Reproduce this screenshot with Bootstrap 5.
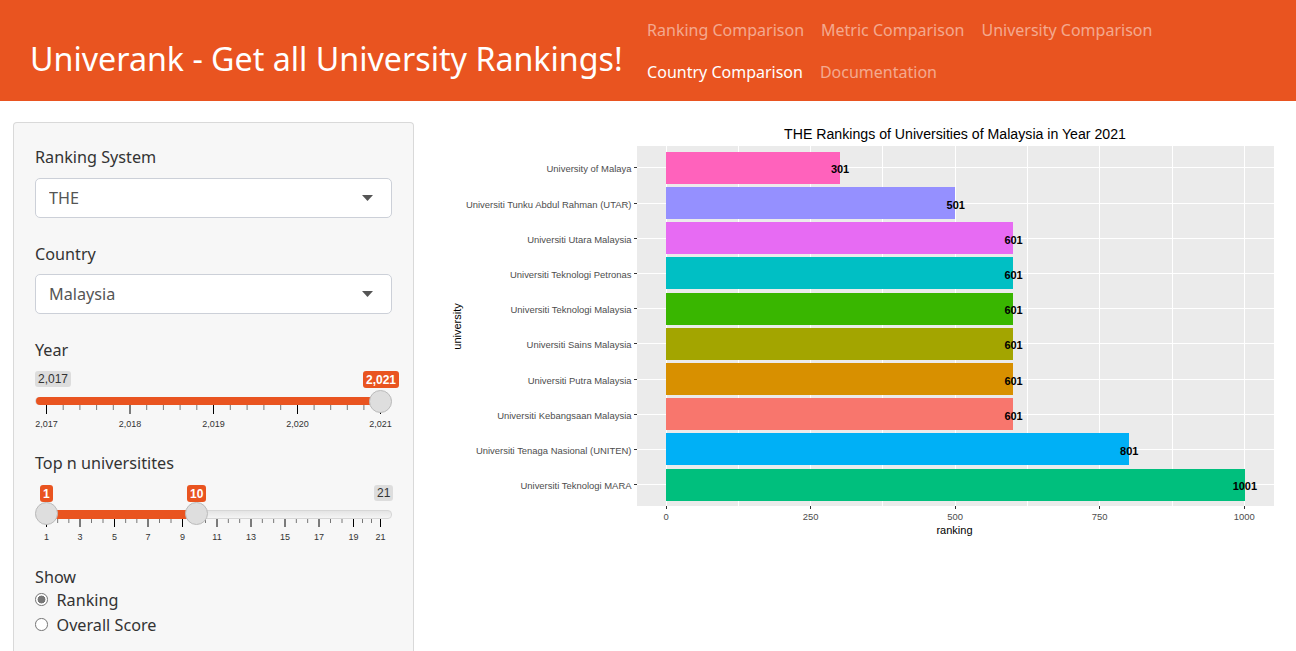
<!DOCTYPE html>
<html lang="en">
<head>
<meta charset="UTF-8">
<meta name="viewport" content="width=device-width, initial-scale=1.0">
<title>Univerank</title>
<link rel="stylesheet" href="https://cdn.jsdelivr.net/npm/bootstrap@5.3.0/dist/css/bootstrap.min.css">
<style>
html, body { height: 651px; overflow: hidden; }
body { font-family: "Noto Sans", sans-serif; color: #333; background: #fff; }
.top-bar { background: #e95420; height: 101px; padding: 0 0 0 30px; flex-wrap: nowrap; align-items: center; justify-content: flex-start; }
.top-bar .navbar-brand { font-size: 32.2px; color: #fff; padding: 16px 0 0; margin: 0 24.5px 0 0; line-height: 38px; }
.top-bar .navbar-nav { width: 560px; flex-wrap: wrap; flex-direction: row; column-gap: 17px; }
.top-bar .nav-link { font-size: 16px; line-height: 22px; padding: 10px 0; color: rgba(255, 255, 255, .5); }
.top-bar .nav-link.active { color: #fff; }
.side-col { padding: 21px 18px 0 13px; }
.filter-well { background: #f7f7f7; border: 1px solid #d9d9d9; border-bottom: 0; border-radius: 4px 4px 0 0; padding: 22px 21px 0; height: 529px; }
.filter-label { display: block; font-size: 16.2px; line-height: 24px; margin-bottom: 9px; color: #333; }
.filter-select { height: 40px; font-size: 16.2px; color: #555; padding: 0 13px; border-color: #ccd0d8; border-radius: 5px; margin-bottom: 24px; background-image: url("data:image/svg+xml,%3csvg xmlns='http://www.w3.org/2000/svg' viewBox='0 0 11 6'%3e%3cpath fill='%23555' d='M0 0h11L5.500 6z'/%3e%3c/svg%3e"); background-size: 11px 6px; background-position: right 18px center; }
.range-box { position: relative; width: 357px; margin-bottom: 16px; }
#slider-top { margin-bottom: 18px; }
#slider-top .range-badge { top: 1px; }
#slider-top .range-knob { top: -9px; }
#slider-top .range-track { height: 9px; }
#slider-top .range-fill { height: 9px; }
#slider-top .range-ticks { margin-top: -1px; }
.range-badges { position: relative; height: 26px; }
.range-badge { position: absolute; top: 0; font: 12px/16px "Liberation Sans", sans-serif; padding: 0 3px; border-radius: 3px; background: #ddd; color: #333; text-align: center; }
.range-badge.on { background: #e95420; color: #fff; font-weight: 700; height: 17px; line-height: 18px; }
.range-track { position: relative; height: 8px; border-radius: 4px; background: linear-gradient(#e4e4e4, #f4f4f4); border: 1px solid #d6d6d6; }
.range-fill { position: absolute; top: -1px; height: 8px; background: #e95420; border-radius: 4px; }
.range-knob { position: absolute; top: -8px; width: 23px; height: 23px; margin-left: -11.5px; border-radius: 50%; background: #dedede; border: 1px solid #bbb; }
.range-ticks { display: block; width: 357px; height: 30px; }
.range-ticks text { font: 9px "Liberation Sans", sans-serif; fill: #333; text-anchor: middle; }
.show-label { display: block; font-size: 16.2px; line-height: 22px; margin: 0; }
.show-opt { display: flex; align-items: center; gap: 9px; min-height: 0; padding: 0; margin: 0; height: 25px; font-size: 16.2px; }
.show-opt .form-check-input { float: none; margin: 0 0 2px; width: 12.5px; height: 12.5px; border: 1px solid #777; box-shadow: none; }
.show-opt .form-check-input:checked { background: radial-gradient(circle, #777 48%, #fff 54%); border-color: #777; }
.plot-svg { display: block; width: 864px; height: 420px; margin-top: 21px; }
.plot-svg text { font-family: "Liberation Sans", sans-serif; }
.plot-svg path, .plot-svg rect { shape-rendering: crispEdges; }
.ax-y { font-size: 9.45px; fill: #4d4d4d; text-anchor: end; }
.ax-x { font-size: 9.45px; fill: #4d4d4d; text-anchor: middle; }
.ax-title { font-size: 11px; fill: #000; text-anchor: middle; }
.val { font-size: 11px; font-weight: 700; fill: #000; text-anchor: middle; }
</style>
</head>
<body>
<nav class="navbar top-bar">
  <a class="navbar-brand" href="#">Univerank - Get all University Rankings!</a>
  <ul class="navbar-nav">
    <li class="nav-item"><a class="nav-link" href="#">Ranking Comparison</a></li>
    <li class="nav-item"><a class="nav-link" href="#">Metric Comparison</a></li>
    <li class="nav-item"><a class="nav-link" href="#">University Comparison</a></li>
    <li class="nav-item"><a class="nav-link active" href="#">Country Comparison</a></li>
    <li class="nav-item"><a class="nav-link" href="#">Documentation</a></li>
  </ul>
</nav>

<div class="container-fluid p-0">
  <div class="row g-0">
    <div class="col-4 side-col">
      <form class="filter-well">
        <label class="filter-label">Ranking System</label>
        <select class="form-select filter-select"><option>THE</option></select>
        <label class="filter-label mb-2">Country</label>
        <select class="form-select filter-select"><option>Malaysia</option></select>

        <label class="filter-label">Year</label>
        <div class="range-box" id="slider-year"></div>

        <label class="filter-label">Top n universitites</label>
        <div class="range-box" id="slider-top"></div>

        <label class="show-label">Show</label>
        <label class="form-check show-opt"><input class="form-check-input" type="radio" name="show" checked> Ranking</label>
        <label class="form-check show-opt"><input class="form-check-input" type="radio" name="show"> Overall Score</label>
      </form>
    </div>
    <div class="col-8">
      <svg class="plot-svg" id="plot" viewBox="432 122 864 420"></svg>
    </div>
  </div>
</div>

<script src="https://cdn.jsdelivr.net/npm/bootstrap@5.3.0/dist/js/bootstrap.bundle.min.js"></script>
<script>
  // sliders: pixel positions are inside the 357px wide track
  function buildSlider(el, cfg) {
    let badges = cfg.badges.map(b =>
      `<span class="range-badge ${b.on ? 'on' : ''}" style="left:${b.left}px">${b.text}</span>`).join('');
    let knobs = cfg.knobs.map(k => `<span class="range-knob" style="left:${k}px"></span>`).join('');
    let ticks = '';
    cfg.major.forEach((x, i) => {
      ticks += `<path d="M${x} 0v9" stroke="#000"/>`;
      ticks += `<text x="${x}" y="22">${cfg.labels[i]}</text>`;
      if (i < cfg.major.length - 1) {
        let step = (cfg.major[i + 1] - x) / cfg.minor;
        for (let m = 1; m < cfg.minor; m++) {
          ticks += `<path d="M${x + step * m} 0v5" stroke="#777"/>`;
        }
      }
    });
    el.innerHTML = `<div class="range-badges">${badges}</div>
      <div class="range-track"><div class="range-fill" style="left:${cfg.fill[0]}px;width:${cfg.fill[1] - cfg.fill[0]}px"></div>${knobs}</div>
      <svg class="range-ticks" viewBox="0 0 357 30">${ticks}</svg>`;
  }

  buildSlider(document.getElementById('slider-year'), {
    badges: [{ text: '2,017', left: 0 }, { text: '2,021', left: 328, on: true }],
    knobs: [344],
    fill: [0, 344],
    major: [11.5, 95, 178.5, 262.5, 345.5],
    labels: ['2,017', '2,018', '2,019', '2,020', '2,021'],
    minor: 5
  });
  buildSlider(document.getElementById('slider-top'), {
    badges: [{ text: '1', left: 5, on: true }, { text: '10', left: 152, on: true }, { text: '21', left: 339 }],
    knobs: [10.5, 160.5],
    fill: [11, 161],
    major: [11.5, 45, 79.5, 113, 147.5, 182, 216, 250, 284, 318.5, 345.5],
    labels: [1, 3, 5, 7, 9, 11, 13, 15, 17, 19, 21],
    minor: 3
  });

  // plot
  const rows = [
    ['University of Malaya', 301, '#ff62bc'],
    ['Universiti Tunku Abdul Rahman (UTAR)', 501, '#9590ff'],
    ['Universiti Utara Malaysia', 601, '#e76bf3'],
    ['Universiti Teknologi Petronas', 601, '#00bfc4'],
    ['Universiti Teknologi Malaysia', 601, '#39b600'],
    ['Universiti Sains Malaysia', 601, '#a3a500'],
    ['Universiti Putra Malaysia', 601, '#d89000'],
    ['Universiti Kebangsaan Malaysia', 601, '#f8766d'],
    ['Universiti Tenaga Nasional (UNITEN)', 801, '#00b0f6'],
    ['Universiti Teknologi MARA', 1001, '#00bf7d']
  ];
  const x0 = 666, perUnit = 0.5783, panelL = 637, panelR = 1274, panelT = 146, panelB = 506;
  const sx = v => x0 + v * perUnit;
  const sy = i => 167.8 + 35.2 * i;
  let s = `<rect x="${panelL}" y="${panelT}" width="${panelR - panelL}" height="${panelB - panelT}" fill="#ebebeb"/>`;
  [125, 375, 625, 875].forEach(v => {
    s += `<path d="M${sx(v)} ${panelT}V${panelB}" stroke="#fff" stroke-width="1"/>`;
  });
  [0, 250, 500, 750, 1000].forEach(v => {
    s += `<path d="M${sx(v)} ${panelT}V${panelB}" stroke="#fff" stroke-width="1"/>`;
    s += `<path d="M${sx(v)} ${panelB}v3" stroke="#333" stroke-width="1"/>`;
    s += `<text class="ax-x" x="${sx(v)}" y="520">${v}</text>`;
  });
  rows.forEach((r, i) => {
    const y = sy(i);
    s += `<path d="M${panelL} ${y}H${panelR}" stroke="#fff" stroke-width="1"/>`;
    s += `<path d="M634 ${y}H${panelL}" stroke="#333" stroke-width="1"/>`;
    s += `<text class="ax-y" x="631.5" y="${y + 4.5}">${r[0]}</text>`;
  });
  rows.forEach((r, i) => {
    const y = sy(i);
    s += `<rect x="${x0}" y="${y - 16}" width="${Math.floor(r[1] * 0.5785)}" height="32" fill="${r[2]}"/>`;
    s += `<text class="val" x="${sx(r[1])}" y="${y + 5.5}">${r[1]}</text>`;
  });
  s += `<text x="955" y="139" font-size="14.15" fill="#000" text-anchor="middle">THE Rankings of Universities of Malaysia in Year 2021</text>`;
  s += `<text class="ax-title" x="954.5" y="534">ranking</text>`;
  s += `<text class="ax-title" transform="translate(461 326.5) rotate(-90)">university</text>`;
  document.getElementById('plot').innerHTML = s;
</script>
</body>
</html>
